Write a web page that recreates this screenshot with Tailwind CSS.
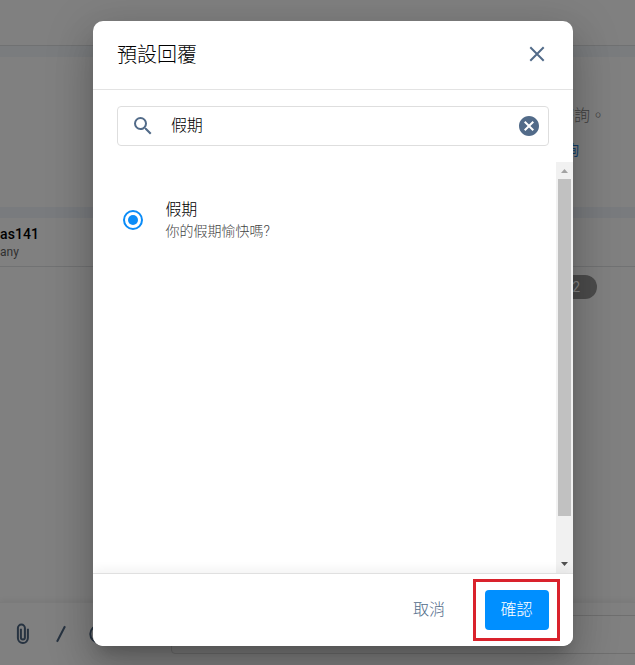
<!DOCTYPE html>
<html lang="zh-Hant">
<head>
<meta charset="utf-8">
<title>預設回覆</title>
<script src="https://cdn.jsdelivr.net/npm/@tailwindcss/browser@4"></script>
</head>
<body class="relative h-[665px] w-[635px] overflow-hidden bg-[#808080] font-['Roboto','Noto_Sans_CJK_TC',sans-serif]">
  <!-- Dimmed chat page -->
  <main class="flex h-full flex-col">
    <header class="h-[46px] shrink-0 border-b border-[#707172]"></header>
    <div class="h-[11px] shrink-0 bg-[#7a7c7e]"></div>
    <section class="flex h-[150px] shrink-0 flex-col items-start bg-[#808080] pl-[558px] pt-[47px]">
      <p class="h-[36px] whitespace-nowrap text-[16px] font-light leading-[24px] text-[#3f3f3f]">諮詢。</p>
      <p class="-ml-[7px] whitespace-nowrap text-[14px] leading-[20px] text-[#123f6c]">諮詢</p>
    </section>
    <div class="h-[11px] shrink-0 bg-[#797b7e]"></div>
    <section class="h-[49px] shrink-0 border-b border-[#717273] pt-[6px]">
      <p class="text-[14px] font-medium leading-[20px] tracking-[0.1px] text-black">as141</p>
      <p class="text-[12px] leading-[16px] text-[#303030]">any</p>
    </section>
    <section class="flex h-[335px] shrink-0 items-start pl-[540px] pt-[8px]">
      <span class="flex h-6 w-[57px] items-center justify-end rounded-full bg-[#4c4c4c] pr-[17px] text-[14px] text-[#858585]">2</span>
    </section>
    <footer class="flex h-[63px] items-start border-t border-[#7b7b7b] bg-[#808080] pl-[12px] pt-[12px] shadow-[0_-2px_5px_rgba(0,0,0,0.05)]">
      <svg class="mt-[8px] mr-[16px] size-[22px] shrink-0" viewBox="0 0 22 22" fill="none" stroke="#273341" stroke-width="2"><path d="M15.9 5.8v9.3a5 5 0 0 1-10 0V5.1a3.5 3.5 0 0 1 7 0v9.4a2 2 0 0 1-4 0V5.8"/></svg>
      <svg class="mt-[8px] mr-[16px] size-[22px] shrink-0" viewBox="0 0 22 22" fill="none" stroke="#273341" stroke-width="2"><path d="M15 3.2 7 18.8"/></svg>
      <svg class="mt-[8px] size-[22px] shrink-0" viewBox="0 0 22 22" fill="none" stroke="#273341" stroke-width="2"><circle cx="11" cy="11" r="8.7"/></svg>
      <div class="ml-[61px] h-[39px] w-[480px] shrink-0 rounded border border-[#6f6f6f]"></div>
    </footer>
  </main>

  <!-- Preset reply dialog -->
  <div role="dialog" class="absolute left-[93px] top-[21px] flex h-[625px] w-[480px] flex-col overflow-hidden rounded-[10px] bg-white shadow-[0_11px_15px_-7px_rgba(0,0,0,0.2),0_24px_38px_3px_rgba(0,0,0,0.14),0_9px_46px_8px_rgba(0,0,0,0.12)]">
    <div class="flex h-[69px] shrink-0 items-center justify-between border-b border-[#e3e3e3] pl-6 pr-[24px]">
      <h1 class="text-[20px] font-light leading-[28px] text-black">預設回覆</h1>
      <svg class="mb-[3px] size-6" viewBox="0 0 24 24" fill="none" stroke="#526b89" stroke-width="2"><path d="M5.3 5.3 18.7 18.7M18.7 5.3 5.3 18.7"/></svg>
    </div>
    <div class="mx-6 mt-4 flex h-10 shrink-0 items-center rounded border border-[#dedede] pl-[13px] pr-[7px]">
      <svg class="size-6 shrink-0" viewBox="0 0 24 24" fill="#526b89"><path d="M15.5 14h-.79l-.28-.27A6.47 6.47 0 0 0 16 9.5 6.5 6.5 0 1 0 9.5 16c1.61 0 3.09-.59 4.23-1.57l.27.28v.79l5 4.99L20.49 19l-4.99-5zm-6 0C7.01 14 5 11.99 5 9.5S7.01 5 9.5 5 14 7.01 14 9.5 11.99 14 9.5 14z"/></svg>
      <span class="ml-[16px] flex-1 text-[16px] font-light leading-6 tracking-[-0.3px] text-black">假期</span>
      <svg class="size-6 shrink-0" viewBox="0 0 24 24" fill="#526b89"><path d="M12 2C6.47 2 2 6.47 2 12s4.47 10 10 10 10-4.47 10-10S17.53 2 12 2zm5 13.59L15.59 17 12 13.41 8.41 17 7 15.59 10.59 12 7 8.41 8.41 7 12 10.59 15.59 7 17 8.41 13.41 12 17 15.59z"/></svg>
    </div>
    <div class="mt-4 flex h-[411px] shrink-0">
      <div class="flex flex-1 items-start pl-[28px] pt-[36px]">
        <svg class="mt-[10px] size-6 shrink-0" viewBox="0 0 24 24"><circle cx="12" cy="12" r="9" fill="none" stroke="#0b8cf7" stroke-width="2"/><circle cx="12" cy="12" r="5" fill="#0b8cf7"/></svg>
        <div class="ml-[20.5px] pt-px">
          <p class="text-[16px] font-light leading-[22px] tracking-[-0.3px] text-black">假期</p>
          <p class="text-[14px] font-light leading-[21px] text-[#444]">你的假期愉快嗎?</p>
        </div>
      </div>
      <div class="flex w-[17px] flex-col items-center bg-[#f1f1f1]">
        <svg class="h-[17px] w-[17px] shrink-0" viewBox="0 0 17 17"><path d="M5 11 8.5 7 12 11z" fill="#a3a3a3"/></svg>
        <div class="h-[337px] w-[13px] bg-[#c1c1c1]"></div>
        <svg class="mt-auto h-[17px] w-[17px] shrink-0" viewBox="0 0 17 17"><path d="M5 6 8.5 10 12 6z" fill="#505050"/></svg>
      </div>
    </div>
    <div class="relative flex h-[73px] shrink-0 items-start justify-end border-t border-[#e0e0e0] bg-white pr-[13px] pt-[5px] shadow-[0_-4px_10px_rgba(0,0,0,0.05)]">
      <button class="mr-[28px] mt-[11px] h-10 text-[16px] font-light text-[#526b89]">取消</button>
      <div class="flex h-[62px] w-[87px] items-center justify-center border-3 border-[#d9222c]">
        <button class="h-10 w-16 rounded bg-[#008fff] text-[16px] font-light text-white">確認</button>
      </div>
    </div>
  </div>
</body>
</html>
